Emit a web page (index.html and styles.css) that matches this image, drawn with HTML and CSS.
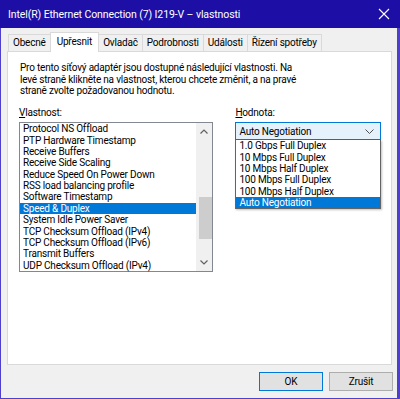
FILE: index.html
```html
<!DOCTYPE html>
<html lang="cs">
<head>
    <meta charset="UTF-8">
    <title>Intel(R) Ethernet Connection (7) I219-V – vlastnosti</title>
    <link rel="stylesheet" href="styles.css">
</head>
<body>
    <div class="window">
        <div class="title-bar">
            <span class="title">Intel(R) Ethernet Connection (7) I219-V – vlastnosti</span>
            <svg class="close" width="12" height="12" viewBox="0 0 12 12">
                <path d="M1 1 L11 11 M11 1 L1 11" stroke="#ffffff" stroke-width="1.1" fill="none"/>
            </svg>
        </div>

        <div class="tabs">
            <div class="tab">Obecné</div>
            <div class="tab active">Upřesnit</div>
            <div class="tab">Ovladač</div>
            <div class="tab">Podrobnosti</div>
            <div class="tab">Události</div>
            <div class="tab">Řízení spotřeby</div>
        </div>

        <div class="panel">
            <p class="intro">Pro tento síťový adaptér jsou dostupné následující vlastnosti. Na<br>levé straně klikněte na vlastnost, kterou chcete změnit, a na pravé<br>straně zvolte požadovanou hodnotu.</p>

            <div class="columns">
                <div class="col-left">
                    <div class="label"><u>V</u>lastnost:</div>
                    <div class="listbox">
                        <ul class="items">
                            <li>Protocol NS Offload</li>
                            <li>PTP Hardware Timestamp</li>
                            <li>Receive Buffers</li>
                            <li>Receive Side Scaling</li>
                            <li>Reduce Speed On Power Down</li>
                            <li>RSS load balancing profile</li>
                            <li>Software Timestamp</li>
                            <li class="selected">Speed &amp; Duplex</li>
                            <li>System Idle Power Saver</li>
                            <li>TCP Checksum Offload (IPv4)</li>
                            <li>TCP Checksum Offload (IPv6)</li>
                            <li>Transmit Buffers</li>
                            <li>UDP Checksum Offload (IPv4)</li>
                        </ul>
                        <div class="scrollbar">
                            <svg class="arrow" width="8" height="5" viewBox="0 0 8 5">
                                <path d="M0.5 4.5 L4 1 L7.5 4.5" stroke="#606060" stroke-width="1.2" fill="none"/>
                            </svg>
                            <div class="track">
                                <div class="thumb"></div>
                            </div>
                            <svg class="arrow" width="8" height="5" viewBox="0 0 8 5">
                                <path d="M0.5 0.5 L4 4 L7.5 0.5" stroke="#606060" stroke-width="1.2" fill="none"/>
                            </svg>
                        </div>
                    </div>
                </div>

                <div class="col-right">
                    <div class="label"><u>H</u>odnota:</div>
                    <div class="combo">
                        <span>Auto Negotiation</span>
                        <svg width="9" height="5" viewBox="0 0 9 5">
                            <path d="M0.5 0.5 L4.5 4.5 L8.5 0.5" stroke="#505050" stroke-width="1" fill="none"/>
                        </svg>
                    </div>
                    <ul class="dropdown">
                        <li>1.0 Gbps Full Duplex</li>
                        <li>10 Mbps Full Duplex</li>
                        <li>10 Mbps Half Duplex</li>
                        <li>100 Mbps Full Duplex</li>
                        <li>100 Mbps Half Duplex</li>
                        <li class="selected">Auto Negotiation</li>
                    </ul>
                </div>
            </div>
        </div>

        <div class="footer">
            <button class="btn default">OK</button>
            <button class="btn">Zrušit</button>
        </div>
    </div>
</body>
</html>
```

FILE: styles.css
```css
body {
    margin: 0;
    padding: 0;
    background-color: #f0f0f0;
    font-family: Roboto, "Noto Sans", sans-serif;
    font-size: 10px;
    letter-spacing: -0.2px;
    color: #000000;
}

.window {
    width: 400px;
    height: 399px;
    box-sizing: border-box;
    border: 1px solid #4f40cc;
    border-top: none;
    border-right-width: 3px;
    display: flex;
    flex-direction: column;
    background-color: #f0f0f0;
}

.title-bar {
    height: 27px;
    background-color: #1d0fa6;
    margin: 0 -3px 0 -1px;
    display: flex;
    align-items: center;
    justify-content: space-between;
    padding: 1px 10px 0 8px;
    color: #ffffff;
    font-size: 10.5px;
    letter-spacing: -0.1px;
    flex-shrink: 0;
}

.close {
    margin-top: -1px;
}

/* záložky */
.tabs {
    display: flex;
    align-items: flex-end;
    padding-left: 8px;
    height: 23px;
    flex-shrink: 0;
    position: relative;
    z-index: 1;
}

.tab {
    height: 16px;
    line-height: 15px;
    padding: 0 4px;
    border: 1px solid #d9d9d9;
    border-bottom: none;
    margin-left: -1px;
    background-color: #f0f0f0;
}

.tab.active {
    height: 19px;
    line-height: 17px;
    margin-bottom: -1px;
    background-color: #ffffff;
    padding: 0 6px;
}

.panel {
    height: 314px;
    margin: 0 5px 0 6px;
    box-sizing: border-box;
    border: 1px solid #d9d9d9;
    background-color: #ffffff;
    padding: 10px 10px 0 12px;
    flex-shrink: 0;
}

.intro {
    margin: 0;
    line-height: 11.7px;
    white-space: nowrap;
}

.columns {
    display: flex;
    margin-top: 10px;
    margin-left: -1px;
}

.label {
    line-height: 11px;
    height: 16px;
}

.col-left {
    width: 195px;
}

.col-right {
    margin-left: 22px;
    width: 146px;
}

.listbox {
    display: flex;
    height: 150px;
    box-sizing: border-box;
    border: 1px solid #828790;
    margin-top: -1px;
}

.items {
    list-style: none;
    margin: 0;
    padding: 0;
    flex: 1;
}

.items li,
.dropdown li {
    height: 11.4px;
    line-height: 11.4px;
    padding-left: 3px;
    white-space: nowrap;
}

.items li.selected,
.dropdown li.selected {
    background-color: #0078d7;
    color: #ffffff;
}

.scrollbar {
    width: 16px;
    background-color: #f0f0f0;
    display: flex;
    flex-direction: column;
    align-items: center;
}

.arrow {
    margin: 6px 0;
}

.track {
    flex: 1;
    width: 100%;
    position: relative;
}

.thumb {
    position: absolute;
    left: 3px;
    right: 0;
    top: 57px;
    height: 42px;
    background-color: #cdcdcd;
}

.combo {
    height: 18px;
    box-sizing: border-box;
    border: 1px solid #0078d7;
    background-color: #e5f1fb;
    display: flex;
    align-items: center;
    justify-content: space-between;
    padding: 0 6px 0 3px;
    margin-top: -1px;
}

.dropdown {
    list-style: none;
    margin: 0;
    padding: 0;
    border: 1px solid #646464;
    border-top: none;
    background-color: #ffffff;
    box-shadow: 1px 1px 2px rgba(0, 0, 0, 0.25);
}

.footer {
    display: flex;
    justify-content: flex-end;
    gap: 6px;
    padding: 7px 4px 0 0;
}

.btn {
    width: 64px;
    height: 19px;
    font-family: inherit;
    font-size: 10px;
    letter-spacing: -0.2px;
    padding: 0;
    background-color: #e1e1e1;
    border: 1px solid #adadad;
    border-radius: 0;
    color: #000000;
}

.btn.default {
    border: 1px solid #0078d7;
}
```
